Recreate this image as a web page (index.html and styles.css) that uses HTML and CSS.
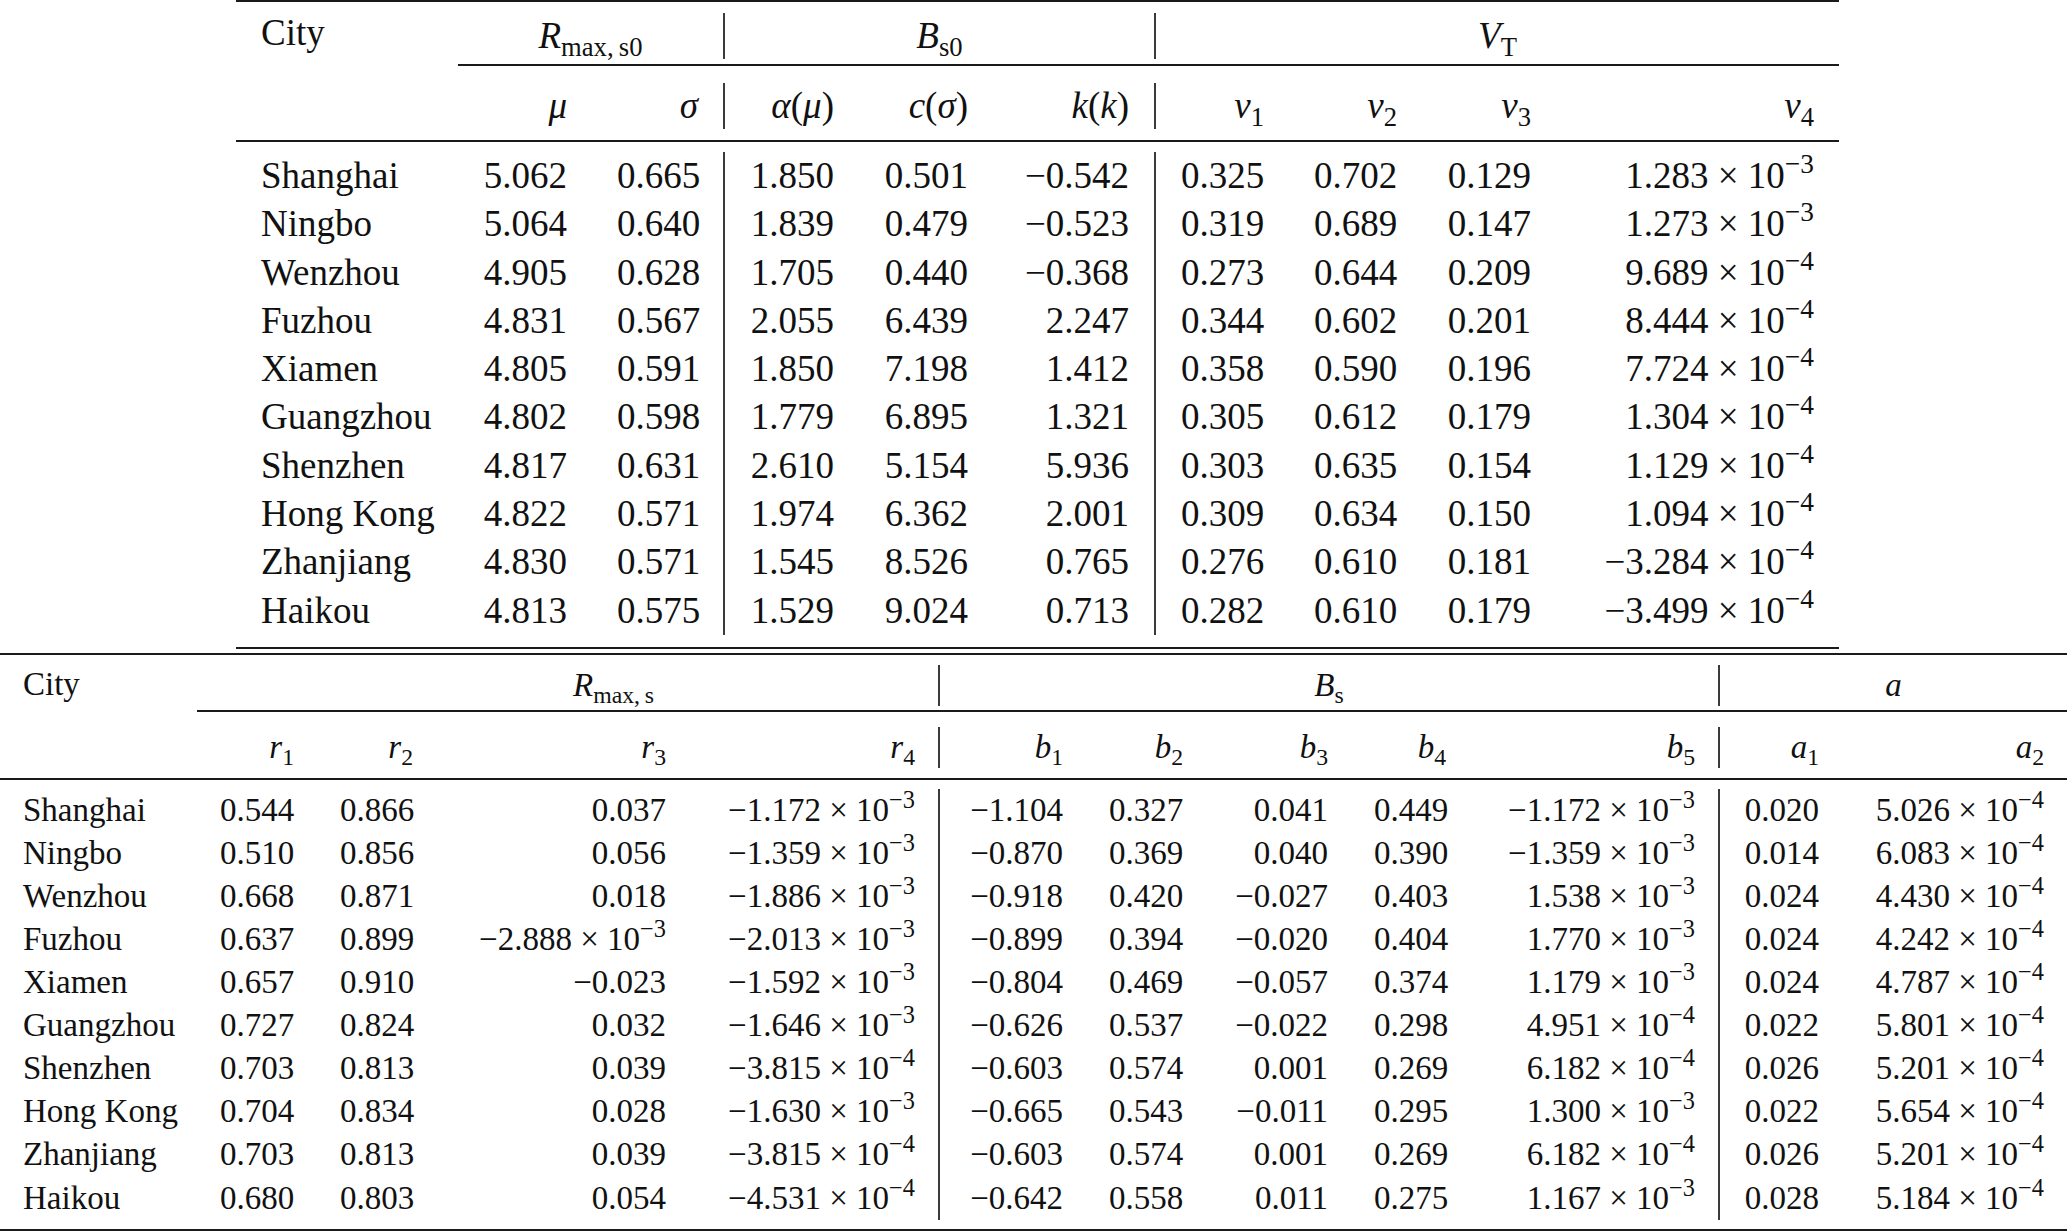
FILE: index.html
```html
<!DOCTYPE html>
<html lang="en">
<head>
<meta charset="utf-8">
<title>City parameters</title>
<link rel="stylesheet" href="styles.css">
</head>
<body>
<div class="page">
<table class="tbl t1">
<colgroup>
<col class="w222"><col class="w134"><col class="w133"><col class="w134"><col class="w134"><col class="w163"><col class="w133"><col class="w133"><col class="w134"><col class="w283">
</colgroup>
<tbody>
<tr class="rule"><td colspan="10"></td></tr>
<tr class="gap g11"><td colspan="10"></td></tr>
<tr class="hd"><th class="l top">City</th><th colspan="2" class="c vr"><i>R</i><sub>max,&thinsp;s0</sub></th><th colspan="3" class="c vr"><i>B</i><sub>s0</sub></th><th colspan="4" class="c"><i>V</i><sub>T</sub></th></tr>
<tr class="gap g5"><td colspan="10"></td></tr>
<tr class="rule thin"><td class="none"></td><td colspan="9"></td></tr>
<tr class="gap g17"><td colspan="10"></td></tr>
<tr class="hd"><th></th><th><i>μ</i></th><th class="vr"><i>σ</i></th><th><i>α</i>(<i>μ</i>)</th><th><i>c</i>(<i>σ</i>)</th><th class="vr"><i>k</i>(<i>k</i>)</th><th><i>v</i><sub>1</sub></th><th><i>v</i><sub>2</sub></th><th><i>v</i><sub>3</sub></th><th><i>v</i><sub>4</sub></th></tr>
<tr class="gap g11"><td colspan="10"></td></tr>
<tr class="rule thin"><td colspan="10"></td></tr>
<tr class="gap g10"><td colspan="10"></td></tr>
<tr class="row"><td class="l">Shanghai</td><td>5.062</td><td class="vr">0.665</td><td>1.850</td><td>0.501</td><td class="vr">−0.542</td><td>0.325</td><td>0.702</td><td>0.129</td><td>1.283 × 10<sup>−3</sup></td></tr>
<tr class="row"><td class="l">Ningbo</td><td>5.064</td><td class="vr">0.640</td><td>1.839</td><td>0.479</td><td class="vr">−0.523</td><td>0.319</td><td>0.689</td><td>0.147</td><td>1.273 × 10<sup>−3</sup></td></tr>
<tr class="row"><td class="l">Wenzhou</td><td>4.905</td><td class="vr">0.628</td><td>1.705</td><td>0.440</td><td class="vr">−0.368</td><td>0.273</td><td>0.644</td><td>0.209</td><td>9.689 × 10<sup>−4</sup></td></tr>
<tr class="row"><td class="l">Fuzhou</td><td>4.831</td><td class="vr">0.567</td><td>2.055</td><td>6.439</td><td class="vr">2.247</td><td>0.344</td><td>0.602</td><td>0.201</td><td>8.444 × 10<sup>−4</sup></td></tr>
<tr class="row"><td class="l">Xiamen</td><td>4.805</td><td class="vr">0.591</td><td>1.850</td><td>7.198</td><td class="vr">1.412</td><td>0.358</td><td>0.590</td><td>0.196</td><td>7.724 × 10<sup>−4</sup></td></tr>
<tr class="row"><td class="l">Guangzhou</td><td>4.802</td><td class="vr">0.598</td><td>1.779</td><td>6.895</td><td class="vr">1.321</td><td>0.305</td><td>0.612</td><td>0.179</td><td>1.304 × 10<sup>−4</sup></td></tr>
<tr class="row"><td class="l">Shenzhen</td><td>4.817</td><td class="vr">0.631</td><td>2.610</td><td>5.154</td><td class="vr">5.936</td><td>0.303</td><td>0.635</td><td>0.154</td><td>1.129 × 10<sup>−4</sup></td></tr>
<tr class="row"><td class="l">Hong Kong</td><td>4.822</td><td class="vr">0.571</td><td>1.974</td><td>6.362</td><td class="vr">2.001</td><td>0.309</td><td>0.634</td><td>0.150</td><td>1.094 × 10<sup>−4</sup></td></tr>
<tr class="row"><td class="l">Zhanjiang</td><td>4.830</td><td class="vr">0.571</td><td>1.545</td><td>8.526</td><td class="vr">0.765</td><td>0.276</td><td>0.610</td><td>0.181</td><td>−3.284 × 10<sup>−4</sup></td></tr>
<tr class="row"><td class="l">Haikou</td><td>4.813</td><td class="vr">0.575</td><td>1.529</td><td>9.024</td><td class="vr">0.713</td><td>0.282</td><td>0.610</td><td>0.179</td><td>−3.499 × 10<sup>−4</sup></td></tr>
<tr class="gap g12"><td colspan="10"></td></tr>
<tr class="rule"><td colspan="10"></td></tr>
</tbody>
</table>

<table class="tbl t2">
<colgroup>
<col class="w197"><col class="w120"><col class="w119"><col class="w253"><col class="w251"><col class="w146"><col class="w120"><col class="w145"><col class="w118"><col class="w251"><col class="w122"><col class="w225">
</colgroup>
<tbody>
<tr class="rule"><td colspan="12"></td></tr>
<tr class="gap g10"><td colspan="12"></td></tr>
<tr class="hd"><th class="l top">City</th><th colspan="4" class="c vr shift"><i>R</i><sub>max,&thinsp;s</sub></th><th colspan="5" class="c vr"><i>B</i><sub>s</sub></th><th colspan="2" class="c"><i>a</i></th></tr>
<tr class="gap g4"><td colspan="12"></td></tr>
<tr class="rule thin"><td class="none"></td><td colspan="11"></td></tr>
<tr class="gap g15"><td colspan="12"></td></tr>
<tr class="hd"><th></th><th><i>r</i><sub>1</sub></th><th><i>r</i><sub>2</sub></th><th><i>r</i><sub>3</sub></th><th class="vr"><i>r</i><sub>4</sub></th><th><i>b</i><sub>1</sub></th><th><i>b</i><sub>2</sub></th><th><i>b</i><sub>3</sub></th><th><i>b</i><sub>4</sub></th><th class="vr"><i>b</i><sub>5</sub></th><th><i>a</i><sub>1</sub></th><th><i>a</i><sub>2</sub></th></tr>
<tr class="gap g10"><td colspan="12"></td></tr>
<tr class="rule thin"><td colspan="12"></td></tr>
<tr class="gap g9"><td colspan="12"></td></tr>
<tr class="row"><td class="l">Shanghai</td><td>0.544</td><td>0.866</td><td>0.037</td><td class="vr">−1.172 × 10<sup>−3</sup></td><td>−1.104</td><td>0.327</td><td>0.041</td><td>0.449</td><td class="vr">−1.172 × 10<sup>−3</sup></td><td>0.020</td><td>5.026 × 10<sup>−4</sup></td></tr>
<tr class="row"><td class="l">Ningbo</td><td>0.510</td><td>0.856</td><td>0.056</td><td class="vr">−1.359 × 10<sup>−3</sup></td><td>−0.870</td><td>0.369</td><td>0.040</td><td>0.390</td><td class="vr">−1.359 × 10<sup>−3</sup></td><td>0.014</td><td>6.083 × 10<sup>−4</sup></td></tr>
<tr class="row"><td class="l">Wenzhou</td><td>0.668</td><td>0.871</td><td>0.018</td><td class="vr">−1.886 × 10<sup>−3</sup></td><td>−0.918</td><td>0.420</td><td>−0.027</td><td>0.403</td><td class="vr">1.538 × 10<sup>−3</sup></td><td>0.024</td><td>4.430 × 10<sup>−4</sup></td></tr>
<tr class="row"><td class="l">Fuzhou</td><td>0.637</td><td>0.899</td><td>−2.888 × 10<sup>−3</sup></td><td class="vr">−2.013 × 10<sup>−3</sup></td><td>−0.899</td><td>0.394</td><td>−0.020</td><td>0.404</td><td class="vr">1.770 × 10<sup>−3</sup></td><td>0.024</td><td>4.242 × 10<sup>−4</sup></td></tr>
<tr class="row"><td class="l">Xiamen</td><td>0.657</td><td>0.910</td><td>−0.023</td><td class="vr">−1.592 × 10<sup>−3</sup></td><td>−0.804</td><td>0.469</td><td>−0.057</td><td>0.374</td><td class="vr">1.179 × 10<sup>−3</sup></td><td>0.024</td><td>4.787 × 10<sup>−4</sup></td></tr>
<tr class="row"><td class="l">Guangzhou</td><td>0.727</td><td>0.824</td><td>0.032</td><td class="vr">−1.646 × 10<sup>−3</sup></td><td>−0.626</td><td>0.537</td><td>−0.022</td><td>0.298</td><td class="vr">4.951 × 10<sup>−4</sup></td><td>0.022</td><td>5.801 × 10<sup>−4</sup></td></tr>
<tr class="row"><td class="l">Shenzhen</td><td>0.703</td><td>0.813</td><td>0.039</td><td class="vr">−3.815 × 10<sup>−4</sup></td><td>−0.603</td><td>0.574</td><td>0.001</td><td>0.269</td><td class="vr">6.182 × 10<sup>−4</sup></td><td>0.026</td><td>5.201 × 10<sup>−4</sup></td></tr>
<tr class="row"><td class="l">Hong Kong</td><td>0.704</td><td>0.834</td><td>0.028</td><td class="vr">−1.630 × 10<sup>−3</sup></td><td>−0.665</td><td>0.543</td><td>−0.011</td><td>0.295</td><td class="vr">1.300 × 10<sup>−3</sup></td><td>0.022</td><td>5.654 × 10<sup>−4</sup></td></tr>
<tr class="row"><td class="l">Zhanjiang</td><td>0.703</td><td>0.813</td><td>0.039</td><td class="vr">−3.815 × 10<sup>−4</sup></td><td>−0.603</td><td>0.574</td><td>0.001</td><td>0.269</td><td class="vr">6.182 × 10<sup>−4</sup></td><td>0.026</td><td>5.201 × 10<sup>−4</sup></td></tr>
<tr class="row"><td class="l">Haikou</td><td>0.680</td><td>0.803</td><td>0.054</td><td class="vr">−4.531 × 10<sup>−4</sup></td><td>−0.642</td><td>0.558</td><td>0.011</td><td>0.275</td><td class="vr">1.167 × 10<sup>−3</sup></td><td>0.028</td><td>5.184 × 10<sup>−4</sup></td></tr>
<tr class="gap g9"><td colspan="12"></td></tr>
<tr class="rule"><td colspan="12"></td></tr>
</tbody>
</table>
</div>
</body>
</html>
```

FILE: styles.css
```css
html, body {
  margin: 0;
  padding: 0;
  background: #ffffff;
}

body {
  color: #111111;
  font-family: "Liberation Serif", "Times New Roman", serif;
}

.page {
  display: flex;
  flex-direction: column;
  align-items: flex-start;
}

.tbl {
  border-collapse: separate;
  border-spacing: 0;
  table-layout: fixed;
}

.tbl th,
.tbl td {
  padding: 0 25px;
  text-align: right;
  white-space: nowrap;
  font-weight: normal;
  vertical-align: middle;
  box-sizing: border-box;
}

.t1 {
  width: 1603px;
  margin-left: 236px;
  font-size: 37px;
}

.t2 {
  width: 2067px;
  margin-top: 4px;
  font-size: 33px;
}

.t2 th,
.t2 td {
  padding: 0 23px;
}

.tbl .l {
  text-align: left;
}

.tbl .c {
  text-align: center;
}

.tbl .top {
  vertical-align: top;
}

.t2 .shift {
  padding-left: 115px;
}

.tbl .vr {
  border-right: 2px solid #3a3a3a;
}

/* row heights */
.t1 .hd th { height: 46px; line-height: 46px; }
.t1 .hd th.top { line-height: 40px; }
.t1 .row td { height: 48.3px; line-height: 48.3px; }
.t2 .hd th { height: 41px; line-height: 41px; }
.t2 .hd th.top { line-height: 38px; }
.t2 .row td { height: 43.07px; line-height: 43.07px; }

/* horizontal rules */
.tbl .rule td {
  height: 0;
  padding: 0;
  border-top: 2px solid #1a1a1a;
  line-height: 0;
  font-size: 0;
}

.tbl .rule.thin td {
  border-top-width: 2px;
}

.tbl .rule td.none {
  border-top: 0;
}

/* vertical gaps (booktabs rule separation) */
.tbl .gap td {
  padding: 0;
  line-height: 0;
  font-size: 0;
}
.g4 td { height: 4px; }
.g5 td { height: 5px; }
.g9 td { height: 9px; }
.g10 td { height: 10px; }
.g11 td { height: 11px; }
.g12 td { height: 12px; }
.g15 td { height: 15px; }
.g17 td { height: 17px; }

/* math bits */
.tbl i {
  font-style: italic;
}

.tbl sub {
  font-size: 0.72em;
  vertical-align: -0.3em;
  line-height: 0;
  font-style: normal;
}

.tbl sup {
  font-size: 0.74em;
  vertical-align: 0.55em;
  line-height: 0;
}

/* column widths */
.w222 { width: 222px; }
.w134 { width: 134px; }
.w133 { width: 133px; }
.w163 { width: 163px; }
.w283 { width: 283px; }
.w197 { width: 197px; }
.w120 { width: 120px; }
.w119 { width: 119px; }
.w253 { width: 253px; }
.w251 { width: 251px; }
.w146 { width: 146px; }
.w145 { width: 145px; }
.w118 { width: 118px; }
.w122 { width: 122px; }
.w225 { width: 225px; }
```
